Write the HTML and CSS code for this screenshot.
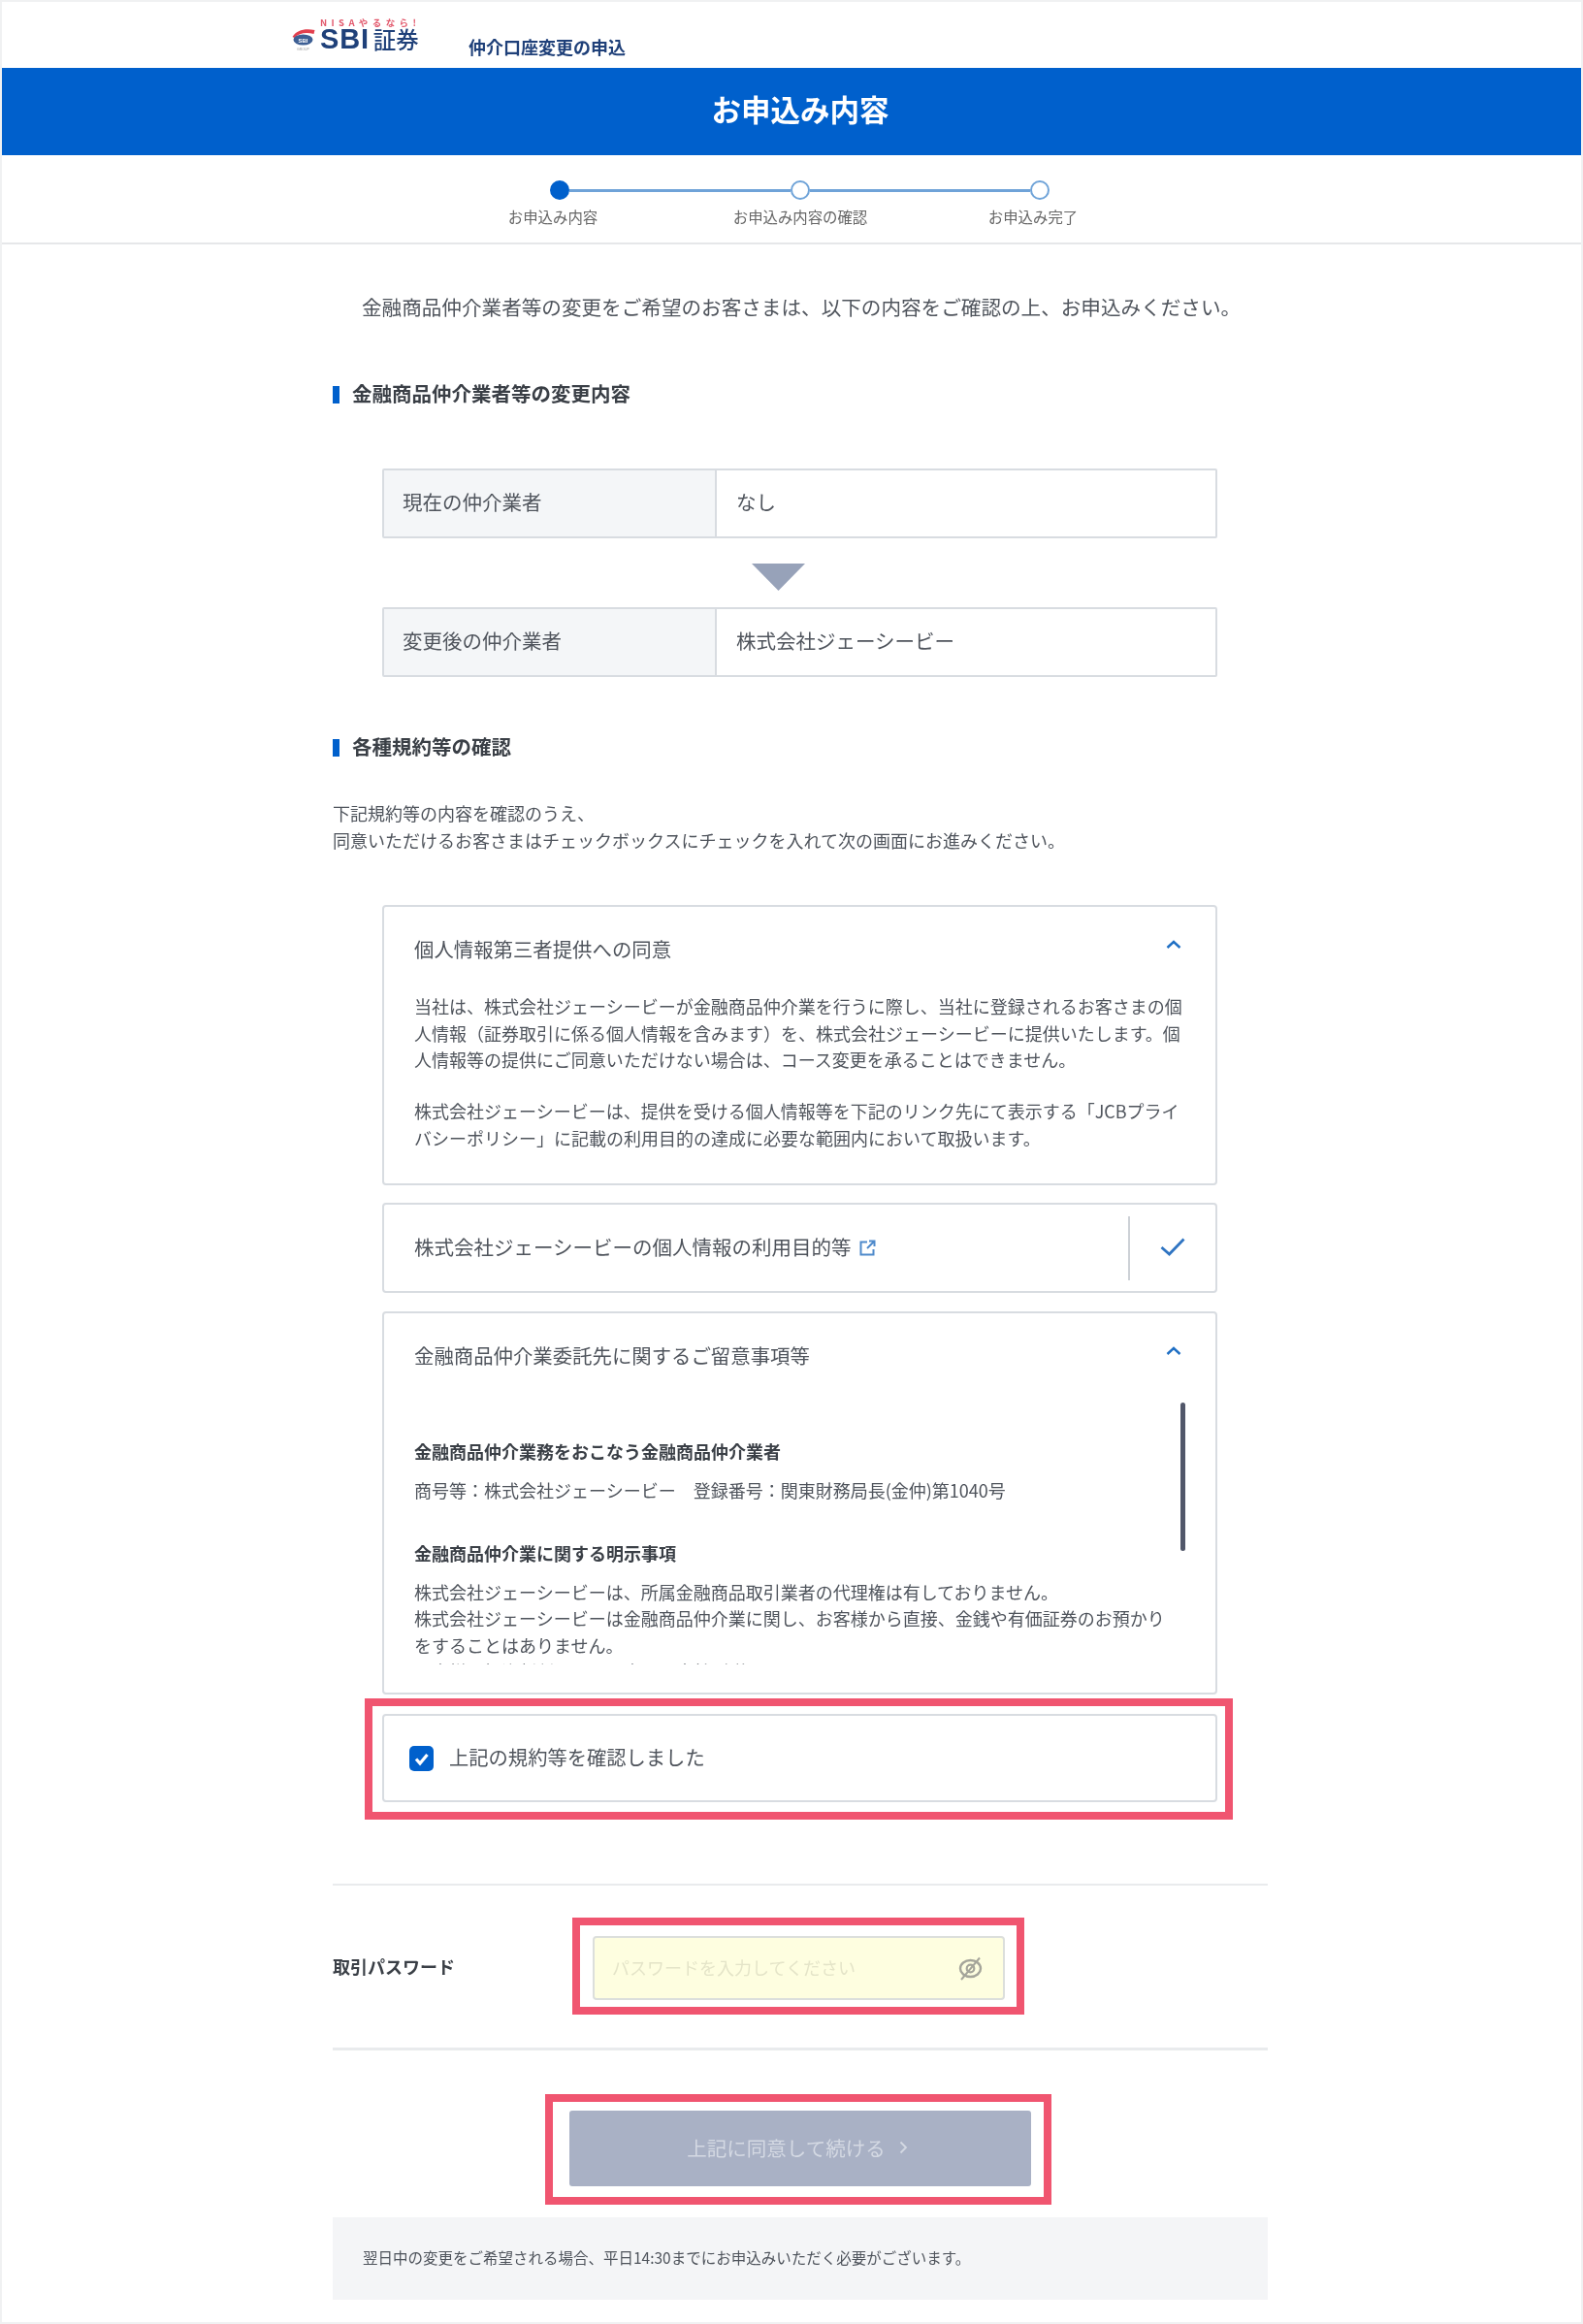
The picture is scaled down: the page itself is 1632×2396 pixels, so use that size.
FILE: index.html
```html
<!DOCTYPE html>
<html lang="ja">
<head>
<meta charset="utf-8">
<title>お申込み内容</title>
<link rel="stylesheet" href="styles.css">
</head>
<body>
<div class="frame">
  <header class="hdr">
    <div class="logo">
      <svg class="logo-mark" viewBox="0 0 26 26" aria-hidden="true">
        <path d="M1 12 C5 5 14 3 24 5 L23 9 C15 7 8 8 3 13 Z" fill="#e2404f"/>
        <ellipse cx="12" cy="15" rx="10" ry="5.5" fill="#3d5f94"/>
        <text x="12" y="17.500" class="logo-mini" text-anchor="middle">SBI</text>
        <text x="12" y="25.500" class="logo-group" text-anchor="middle">GROUP</text>
      </svg>
      <div class="logo-text">
        <span class="logo-nisa">NISAやるなら!</span>
        <span class="logo-name"><b class="logo-sbi">SBI</b><b class="logo-sec">証券</b></span>
      </div>
    </div>
    <span class="hdr-title">仲介口座変更の申込</span>
  </header>
  <h1 class="band">お申込み内容</h1>
  <nav class="stepper">
    <div class="track">
      <span class="dot dot-on"></span><span class="line"></span><span class="dot"></span><span class="line"></span><span class="dot"></span>
    </div>
    <div class="labels">
      <span class="lbl lbl-a">お申込み内容</span><span class="lbl lbl-b">お申込み内容の確認</span><span class="lbl">お申込み完了</span>
    </div>
  </nav>
  <main class="main">
    <p class="intro">金融商品仲介業者等の変更をご希望のお客さまは、以下の内容をご確認の上、お申込みください。</p>
    <h2 class="h2 h2-a"><span class="bar"></span>金融商品仲介業者等の変更内容</h2>
    <div class="tbl tbl-a"><div class="th">現在の仲介業者</div><div class="td">なし</div></div>
    <svg class="arrow" viewBox="0 0 55 28" aria-hidden="true"><polygon points="0,0 55,0 27.500,28" fill="#97a2b9"/></svg>
    <div class="tbl tbl-b"><div class="th">変更後の仲介業者</div><div class="td">株式会社ジェーシービー</div></div>
    <h2 class="h2 h2-b"><span class="bar"></span>各種規約等の確認</h2>
    <p class="lead">下記規約等の内容を確認のうえ、<br>同意いただけるお客さまはチェックボックスにチェックを入れて次の画面にお進みください。</p>

    <section class="box box-a">
      <div class="box-head"><span>個人情報第三者提供への同意</span>
        <svg class="chev" viewBox="0 0 16 9" aria-hidden="true"><path d="M1.500 8 L8 2 L14.500 8" fill="none" stroke="#1f6fc4" stroke-width="2.400"/></svg></div>
      <p class="copy copy-1">当社は、株式会社ジェーシービーが金融商品仲介業を行うに際し、当社に登録されるお客さまの個人情報（証券取引に係る個人情報を含みます）を、株式会社ジェーシービーに提供いたします。個人情報等の提供にご同意いただけない場合は、コース変更を承ることはできません。</p>
      <p class="copy copy-2">株式会社ジェーシービーは、提供を受ける個人情報等を下記のリンク先にて表示する「JCBプライバシーポリシー」に記載の利用目的の達成に必要な範囲内において取扱います。</p>
    </section>

    <section class="box box-b">
      <span class="link-text">株式会社ジェーシービーの個人情報の利用目的等</span>
      <svg class="ext" viewBox="0 0 17 17" aria-hidden="true"><path d="M8 2.500 H1.500 V15.500 H14.500 V10 M10 1.500 H15.500 V7 M15 2 L8 9" fill="none" stroke="#4f8acb" stroke-width="2"/></svg>
      <span class="check-cell"><svg class="check" viewBox="0 0 26 19" aria-hidden="true"><path d="M1.500 10 L9.500 17 L24.500 1.500" fill="none" stroke="#2f74c2" stroke-width="2.800"/></svg></span>
    </section>

    <section class="box box-c">
      <div class="box-head"><span>金融商品仲介業委託先に関するご留意事項等</span>
        <svg class="chev" viewBox="0 0 16 9" aria-hidden="true"><path d="M1.500 8 L8 2 L14.500 8" fill="none" stroke="#1f6fc4" stroke-width="2.400"/></svg></div>
      <div class="scroll">
        <h3 class="sub sub-a">金融商品仲介業務をおこなう金融商品仲介業者</h3>
        <p class="copy copy-3">商号等：株式会社ジェーシービー　登録番号：関東財務局長(金仲)第1040号</p>
        <h3 class="sub sub-b">金融商品仲介業に関する明示事項</h3>
        <p class="copy copy-3">株式会社ジェーシービーは、所属金融商品取引業者の代理権は有しておりません。<br>株式会社ジェーシービーは金融商品仲介業に関し、お客様から直接、金銭や有価証券のお預かりをすることはありません。<br>お客様の投資判断に関わる事項は当社が説明いたします。</p>
        <span class="thumb"></span>
      </div>
    </section>

    <div class="mark mark-check">
      <label class="box box-d">
        <span class="tick"><svg viewBox="0 0 25 26" aria-hidden="true"><path d="M7 13.500 L11 18 L18.500 9" fill="none" stroke="#fff" stroke-width="3.200"/></svg></span>
        <span class="tick-text">上記の規約等を確認しました</span>
      </label>
    </div>

    <hr class="rule rule-a">
    <div class="pw-row">
      <span class="pw-label">取引パスワード</span>
      <div class="mark mark-pw">
        <div class="input">
          <input class="pw" type="text" placeholder="パスワードを入力してください">
          <svg class="eye" viewBox="0 0 25 25" aria-hidden="true">
            <ellipse cx="12.500" cy="12.500" rx="10.500" ry="8.500" fill="none" stroke="#a5a59a" stroke-width="2.400"/>
            <circle cx="12.500" cy="12.500" r="3.800" fill="none" stroke="#a5a59a" stroke-width="2.200"/>
            <path d="M3 24 L22 1.500" stroke="#a5a59a" stroke-width="2"/>
          </svg>
        </div>
      </div>
    </div>
    <hr class="rule rule-b">
    <div class="mark mark-btn">
      <button class="btn" type="button"><span>上記に同意して続ける</span>
        <svg class="btn-chev" viewBox="0 0 9 14" aria-hidden="true"><path d="M1.500 1.500 L7 7 L1.500 12.500" fill="none" stroke="#d4d9e3" stroke-width="1.800"/></svg></button>
    </div>
    <p class="note">翌日中の変更をご希望される場合、平日14:30までにお申込みいただく必要がございます。</p>
  </main>
</div>
</body>
</html>
```
FILE: styles.css
```css
* { box-sizing: border-box; }
html, body { margin: 0; padding: 0; background: #fff; }
body { font-family: "Noto Sans CJK JP", "Noto Sans", sans-serif; color: #4f545c; }
p, h1, h2, h3 { margin: 0; }

.frame { width: 1632px; height: 2396px; border: 2px solid #f0f1f2; overflow: hidden; }

.hdr, .band, .stepper, .intro, .h2, .tbl, .arrow, .lead, .box, .pw-label, .input, .btn, .note { filter: blur(.55px); }

/* header */
.hdr { height: 68px; display: flex; padding-left: 298px; }
.logo { display: flex; width: 132px; height: 34px; margin-top: 16px; }
.logo-mark { width: 27px; height: 26px; margin-top: 8px; flex: none; }
.logo-mini { font: 700 6px "Liberation Sans", sans-serif; fill: #fff; }
.logo-group { font: 400 3.500px "Liberation Sans", sans-serif; fill: #999; }
.logo-text { display: flex; flex-direction: column; margin-left: 3px; }
.logo-nisa { font: 700 9.500px/10px "Noto Sans CJK JP", sans-serif; color: #e2586c; letter-spacing: 4.400px; white-space: nowrap; }
.logo-name { display: flex; align-items: center; height: 25px; }
.logo-sbi { font: 700 29px/24px "Liberation Sans", sans-serif; color: #1f4079; letter-spacing: .8px; }
.logo-sec { font: 500 23.500px/24px "Noto Sans CJK JP", sans-serif; color: #1f4079; margin-left: 4px; }
.hdr-title { font-size: 18px; font-weight: 700; line-height: 26px; color: #1f4079; margin: 32.500px 0 0 51px; white-space: nowrap; }

/* band */
.band { height: 90px; background: #0060cc; color: #fff; font-size: 30.500px; font-weight: 700; line-height: 85px; text-align: center; padding-left: 18px; }

/* stepper */
.stepper { height: 92px; border-bottom: 2px solid #e6e7e9; padding-top: 26px; }
.track { display: flex; align-items: center; width: 515px; margin-left: 565px; }
.dot { flex: none; width: 20px; height: 20px; border-radius: 50%; border: 2px solid #6fa3d8; background: #fff; }
.dot-on { background: #0060cc; border-color: #0060cc; }
.line { flex: 1; height: 3px; background: #6fa3d8; }
.labels { display: flex; margin: 5.500px 0 0 488px; }
.lbl { width: 160px; flex: none; font-size: 15.400px; line-height: 22px; text-align: center; white-space: nowrap; color: #666; }
.lbl-a { margin-right: 95px; }
.lbl-b { margin-right: 80px; }

/* main column */
.main { width: 964px; margin-left: 341px; }
.intro { font-size: 20.600px; line-height: 27px; padding-left: 30px; margin-top: 50.500px; white-space: nowrap; }
.h2 { display: flex; align-items: center; gap: 13px; height: 27px; padding-bottom: 3px; font-size: 20.500px; font-weight: 700; color: #3a3f46; white-space: nowrap; }
.h2-a { margin-top: 63.500px; }
.h2-b { margin-top: 59px; }
.bar { width: 7px; height: 18px; margin-top: 3px; background: #0060cc; flex: none; }

.tbl { display: flex; width: 861px; height: 72px; margin-left: 51px; border: 2px solid #d8dce1; border-radius: 2px; font-size: 20.500px; }
.tbl-a { margin-top: 63px; }
.th { width: 343px; background: #f4f6f8; border-right: 2px solid #d8dce1; padding: 0 0 4px 19px; display: flex; align-items: center; }
.td { flex: 1; padding: 0 0 4px 20px; display: flex; align-items: center; }
.arrow { display: block; width: 55px; height: 28px; margin: 26px 0 17px 432px; }

.lead { font-size: 18px; line-height: 27.500px; margin-top: 41px; white-space: nowrap; }

/* boxes */
.box { display: block; width: 861px; margin-left: 51px; border: 2px solid #d8dce1; border-radius: 4px; background: #fff; }
.box-head { display: flex; justify-content: space-between; align-items: center; font-size: 20.400px; line-height: 27px; padding: 0 35px 0 31px; }
.chev { width: 16px; height: 9px; margin-bottom: 10px; }
.copy { font-size: 18px; line-height: 27.500px; }
.box-a { height: 289px; margin-top: 53px; padding-top: 30px; }
.copy-1 { margin: 32px 30px 0 31px; }
.copy-2 { margin: 25.500px 30px 0 31px; }

.box-b { display: flex; align-items: center; height: 93px; margin-top: 18px; padding-left: 31px; font-size: 20.500px; }
.link-text { white-space: nowrap; margin-bottom: 3px; }
.ext { width: 17px; height: 17px; margin-left: 8px; flex: none; }
.check-cell { margin-left: auto; width: 90px; height: 66px; border-left: 2px solid #cdd1d6; display: flex; align-items: center; justify-content: center; }
.check { width: 26px; height: 19px; margin-bottom: 3px; }

.box-c { height: 395px; margin-top: 19px; padding-top: 30px; }
.scroll { position: relative; height: 274px; margin-top: 31px; overflow: hidden; padding: 40.500px 0 0 31px; }
.sub { font-size: 18px; font-weight: 700; line-height: 27px; color: #3a3f46; }
.sub-b { margin-top: 38px; }
.copy-3 { width: 782px; line-height: 27.400px; margin-top: 13px; }
.thumb { position: absolute; top: 4px; left: 821px; width: 5px; height: 153px; border-radius: 3px; background: #51576a; }

/* annotation frames */
.mark { border: 8px solid #f05570; background: #fff; }
.mark-check { width: 895px; margin: 4px 0 0 33px; padding: 8px 8px 10px 10px; }
.box-d { display: flex; align-items: center; gap: 16px; width: 861px; height: 91px; margin: 0; padding-left: 26px; font-size: 20.300px; }
.tick { width: 25px; height: 26px; border-radius: 5px; background: #0060cc; flex: none; }
.tick svg { display: block; width: 25px; height: 26px; }
.tick-text { margin-bottom: 3px; }

.rule { border: 0; margin: 0; background: #e9ebed; }
.rule-a { height: 2px; margin-top: 66px; }
.rule-b { height: 3px; }

.pw-row { display: flex; align-items: center; padding: 33px 0 34px; }
.pw-label { width: 247px; font-size: 18px; font-weight: 700; color: #3a3f46; white-space: nowrap; }
.mark-pw { width: 466px; padding: 11px 12px 7px 13px; }
.input { display: flex; align-items: center; width: 425px; height: 66px; background: #fefee0; border: 2px solid #dcdfdc; border-radius: 4px; padding: 0 21px 0 18px; }
.pw { flex: 1; min-width: 0; border: 0; background: transparent; outline: 0; padding: 0 0 3px; font: 400 18px "Noto Sans CJK JP", sans-serif; }
.pw::placeholder { color: #e4e4c8; opacity: 1; }
.eye { width: 25px; height: 25px; flex: none; }

.mark-btn { width: 522px; margin: 45px 0 0 219px; padding: 9px 13px 11px 17px; }
.btn { display: flex; align-items: center; justify-content: center; gap: 14px; width: 476px; height: 78px; border: 0; border-radius: 3px; background: #a9b1c5; color: #d4d9e3; font: 400 20.500px "Noto Sans CJK JP", sans-serif; padding: 0 6px 3px 0; }
.btn-chev { width: 9px; height: 14px; }

.note { height: 85px; margin-top: 13px; background: #f4f5f7; padding-left: 31px; font-size: 15.500px; line-height: 83px; white-space: nowrap; }
```
